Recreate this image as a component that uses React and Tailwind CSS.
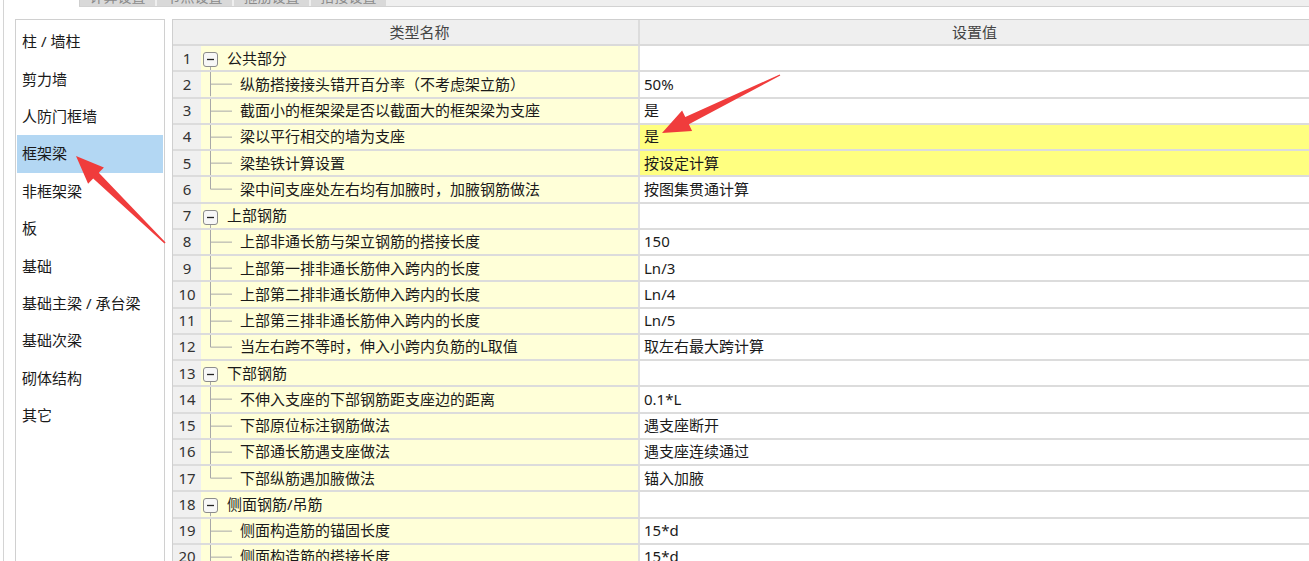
import React from "react";

const sideItems = [
  "柱 / 墙柱",
  "剪力墙",
  "人防门框墙",
  "框架梁",
  "非框架梁",
  "板",
  "基础",
  "基础主梁 / 承台梁",
  "基础次梁",
  "砌体结构",
  "其它",
];

const rows = [
  { n: 1, name: "公共部分", group: true, value: "" },
  { n: 2, name: "纵筋搭接接头错开百分率（不考虑架立筋）", value: "50%" },
  { n: 3, name: "截面小的框架梁是否以截面大的框架梁为支座", value: "是" },
  { n: 4, name: "梁以平行相交的墙为支座", value: "是", hl: true },
  { n: 5, name: "梁垫铁计算设置", value: "按设定计算", hl: true },
  { n: 6, name: "梁中间支座处左右均有加腋时，加腋钢筋做法", value: "按图集贯通计算", last: true },
  { n: 7, name: "上部钢筋", group: true, value: "" },
  { n: 8, name: "上部非通长筋与架立钢筋的搭接长度", value: "150" },
  { n: 9, name: "上部第一排非通长筋伸入跨内的长度", value: "Ln/3" },
  { n: 10, name: "上部第二排非通长筋伸入跨内的长度", value: "Ln/4" },
  { n: 11, name: "上部第三排非通长筋伸入跨内的长度", value: "Ln/5" },
  { n: 12, name: "当左右跨不等时，伸入小跨内负筋的L取值", value: "取左右最大跨计算", last: true },
  { n: 13, name: "下部钢筋", group: true, value: "" },
  { n: 14, name: "不伸入支座的下部钢筋距支座边的距离", value: "0.1*L" },
  { n: 15, name: "下部原位标注钢筋做法", value: "遇支座断开" },
  { n: 16, name: "下部通长筋遇支座做法", value: "遇支座连续通过" },
  { n: 17, name: "下部纵筋遇加腋做法", value: "锚入加腋", last: true },
  { n: 18, name: "侧面钢筋/吊筋", group: true, value: "" },
  { n: 19, name: "侧面构造筋的锚固长度", value: "15*d" },
  { n: 20, name: "侧面构造筋的搭接长度", value: "15*d" },
];

function GroupIcon() {
  return (
    <svg width="26" height="100%" className="shrink-0 h-full">
      <line x1="9.5" y1="20" x2="9.5" y2="100%" stroke="#a8a8a8" strokeWidth="1" />
      <rect x="2.5" y="6.5" width="14" height="14" rx="2.5" fill="#f7f7f7" stroke="#8c8c8c" strokeWidth="1" />
      <line x1="6" y1="13.5" x2="13" y2="13.5" stroke="#222" strokeWidth="1.3" />
    </svg>
  );
}

function Branch({ last }) {
  return (
    <svg width="39" height="100%" className="shrink-0 h-full">
      <line x1="9.5" y1="0" x2="9.5" y2={last ? "50%" : "100%"} stroke="#a8a8a8" strokeWidth="1" />
      <line x1="9.5" y1="50%" x2="31" y2="50%" stroke="#a8a8a8" strokeWidth="1" />
    </svg>
  );
}

export default function App() {
  return (
    <div className="relative w-[1309px] h-[561px] overflow-hidden bg-white font-['Noto_Sans','Noto_Sans_CJK_SC',sans-serif] text-[15px] text-[#1a1a1a]">
      <div className="flex h-full">
        <div className="w-[3px] shrink-0" />
        <div className="flex-1 min-w-0 flex flex-col border-l border-[#d4d4d4]">
          {/* top tab strip (cut off) */}
          <div className="flex h-[7px] shrink-0">
            <div className="w-[75px] shrink-0" />
            <div className="flex-1 flex bg-[#efefef] border-b border-[#d2d2d2]">
              <div className="flex gap-[2px] border-l border-[#cfcfcf]">
                {["计算设置", "节点设置", "箍筋设置", "搭接设置"].map((t) => (
                  <div
                    key={t}
                    className="w-[75px] h-full bg-[#d9d9d9] overflow-hidden flex items-start justify-center text-[14px] leading-[14px] text-[#8a8a8a]"
                  >
                    <span className="-mt-[10px]">{t}</span>
                  </div>
                ))}
              </div>
            </div>
          </div>

          <div className="flex flex-1 min-h-0 pt-[12px]">
            {/* left list */}
            <div className="ml-[11px] w-[150px] shrink-0 border border-b-0 border-[#d0d0d0] px-[1px] pt-[3px]">
              {sideItems.map((s, i) => (
                <div
                  key={s}
                  className={`h-[37.4px] flex items-center pl-[5px] leading-none ${i === 3 ? "bg-[#b3d7f3]" : ""}`}
                >
                  {s}
                </div>
              ))}
            </div>

            {/* table */}
            <div className="ml-[7px] flex-1 min-w-0 border-l border-t border-[#cfcfcf] flex flex-col">
              <div className="flex h-[26px] shrink-0 bg-[#efefef] border-b-2 border-[#dadada] text-[#444] leading-none">
                <div className="w-[28px] shrink-0" />
                <div className="w-[439px] shrink-0 border-r-2 border-[#dcdcdc] flex items-center justify-center">
                  类型名称
                </div>
                <div className="flex-1 flex items-center justify-center">设置值</div>
              </div>
              {rows.map((r) => (
                <div key={r.n} className="flex h-[26.25px] shrink-0 border-b-2 border-[#dcdcdc] leading-none">
                  <div className="w-[28px] shrink-0 bg-[#f0f0f0] flex items-center justify-center text-[#333]">
                    {r.n}
                  </div>
                  <div className="w-[439px] shrink-0 bg-[#ffffd8] border-r-2 border-[#e0e0e0] flex items-center whitespace-nowrap">
                    {r.group ? <GroupIcon /> : <Branch last={r.last} />}
                    <span>{r.name}</span>
                  </div>
                  <div
                    className={`flex-1 flex items-center pl-[4px] ${r.hl ? "bg-[#ffff80]" : "bg-white"}`}
                  >
                    {r.value}
                  </div>
                </div>
              ))}
            </div>
          </div>
        </div>
      </div>

      {/* red annotation arrows */}
      <svg className="absolute inset-0 pointer-events-none" width="1309" height="561">
        <polygon
          fill="#f03c3c"
          points="165.6,242.4 98.8,172.7 103.9,167.5 76,156 88.1,183.7 93.2,178.5 164.4,243.6"
        />
        <polygon
          fill="#f03c3c"
          points="780.3,75.6 688.9,124.3 692.1,131 662,133 682.1,110.5 685.3,117.1 779.7,74.4"
        />
      </svg>
    </div>
  );
}
